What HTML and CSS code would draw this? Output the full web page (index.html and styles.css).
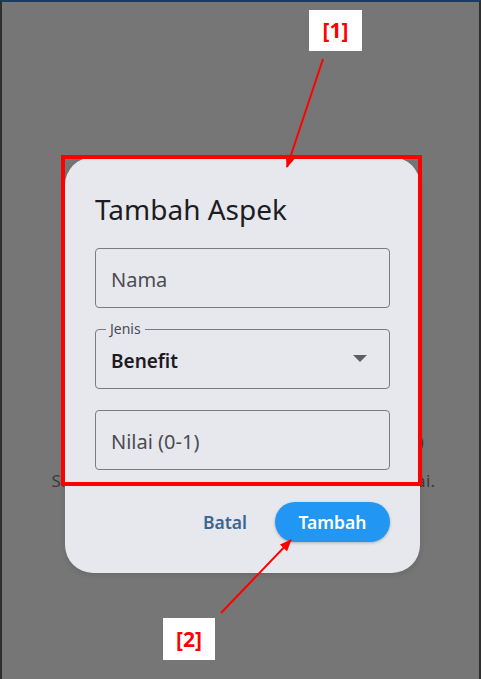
FILE: index.html
```html
<!DOCTYPE html>
<html lang="id">
<head>
<meta charset="utf-8">
<title>Tambah Aspek</title>
<link rel="stylesheet" href="styles.css">
</head>
<body>
<div class="screen">
  <main class="page">
    <p class="empty-title">Belum ada aspek yang ditambahkan. Total: 0</p>
    <p class="empty-sub">Silakan tambahkan aspek untuk mulai menilai.</p>
  </main>

  <section class="dialog" role="dialog" aria-label="Tambah Aspek">
    <h2 class="dialog-title">Tambah Aspek</h2>
    <div class="field">
      <span class="placeholder">Nama</span>
    </div>
    <div class="field field-select">
      <span class="field-label">Jenis</span>
      <span class="value">Benefit</span>
      <svg class="caret" width="14" height="7" viewBox="0 0 14 7"><path d="M0 0 L14 0 L7 7 Z" fill="#5f5f63"/></svg>
    </div>
    <div class="field">
      <span class="placeholder">Nilai (0-1)</span>
    </div>
    <div class="actions">
      <button class="btn-text">Batal</button>
      <button class="btn-filled">Tambah</button>
    </div>
  </section>

  <svg class="annot" width="481" height="679" viewBox="0 0 481 679">
    <defs>
      <marker id="ah" markerWidth="12" markerHeight="10" refX="11" refY="5" orient="auto" markerUnits="userSpaceOnUse">
        <path d="M0 0 L12 5 L0 10 Z" fill="#ff0000"/>
      </marker>
    </defs>
    <rect x="63" y="157" width="357" height="327" fill="none" stroke="#ff0000" stroke-width="4"/>
    <line x1="323" y1="59" x2="287" y2="167" stroke="#ff0000" stroke-width="2" marker-end="url(#ah)"/>
    <line x1="221" y1="613" x2="291" y2="540" stroke="#ff0000" stroke-width="2" marker-end="url(#ah)"/>
  </svg>
  <div class="tag tag-1">[1]</div>
  <div class="tag tag-2">[2]</div>
</div>
</body>
</html>
```

FILE: styles.css
```css
html, body {
  margin: 0;
  padding: 0;
}
body {
  width: 481px;
  height: 679px;
  overflow: hidden;
  background: #767676;
  font-family: "Noto Sans", "Open Sans", sans-serif;
}
.screen {
  position: relative;
  box-sizing: border-box;
  width: 481px;
  height: 679px;
  border-top: 2px solid #1b3b60;
  border-left: 2px solid #2e2e2e;
  border-right: 2px solid #2e2e2e;
  background: #767676;
}
.page {
  padding-top: 429px;
  text-align: center;
  color: #3b3b3b;
}
.empty-title {
  margin: 0;
  padding-right: 55px;
  text-align: right;
  font-size: 17px;
  line-height: 24px;
  white-space: nowrap;
}
.empty-sub {
  margin: 14px 0 0;
  padding-left: 6px;
  font-size: 17px;
  line-height: 24px;
  letter-spacing: 0.28px;
  white-space: nowrap;
}
.dialog {
  position: absolute;
  left: 63px;
  top: 155px;
  width: 355px;
  box-sizing: border-box;
  padding: 35px 30px 31px 30px;
  background: #e7e8ed;
  border-radius: 28px;
  box-shadow: 0 2px 6px rgba(0,0,0,0.12);
}
.dialog-title {
  margin: 0;
  font-size: 28px;
  line-height: 34px;
  font-weight: 400;
  color: #1d1d21;
}
.field {
  position: relative;
  display: flex;
  align-items: center;
  box-sizing: border-box;
  height: 60px;
  margin-top: 21px;
  padding: 0 15px;
  border: 1px solid #7b7b81;
  border-radius: 4px;
}
.dialog-title + .field {
  margin-top: 22px;
}
.placeholder {
  font-size: 20px;
  color: #4b4b52;
  padding-top: 2px;
}
.field-select {
  justify-content: space-between;
  padding-right: 22px;
}
.value {
  font-size: 19px;
  font-weight: 600;
  color: #1c1b1f;
  padding-top: 4px;
}
.caret {
  display: block;
  margin-top: -2px;
}
.field-label {
  position: absolute;
  left: 10px;
  top: -11px;
  padding: 0 4px;
  background: #e7e8ed;
  font-size: 14px;
  line-height: 20px;
  color: #4b4b52;
}
.actions {
  display: flex;
  justify-content: flex-end;
  align-items: center;
  gap: 16px;
  margin-top: 32px;
}
.btn-text,
.btn-filled {
  font-family: "Noto Sans", "Open Sans", sans-serif;
  font-size: 17.5px;
  font-weight: 600;
  height: 40px;
  border-radius: 20px;
  border: none;
  cursor: pointer;
}
.btn-text {
  background: transparent;
  color: #3d6592;
  padding: 0 12px;
}
.btn-filled {
  background: #2196f3;
  color: #ffffff;
  width: 115px;
  padding: 0;
  box-shadow: 0 1px 3px rgba(0,0,0,0.25);
}
.annot {
  position: absolute;
  left: -2px;
  top: -2px;
  pointer-events: none;
}
.tag {
  position: absolute;
  box-sizing: border-box;
  width: 53px;
  height: 41px;
  background: #ffffff;
  color: #ff0000;
  font-family: "Open Sans", "Noto Sans", sans-serif;
  font-weight: 700;
  font-size: 21px;
  line-height: 41px;
  text-align: center;
}
.tag-1 {
  left: 307px;
  top: 8px;
}
.tag-2 {
  left: 161px;
  top: 616px;
  width: 52px;
  height: 42px;
  line-height: 42px;
}
```
